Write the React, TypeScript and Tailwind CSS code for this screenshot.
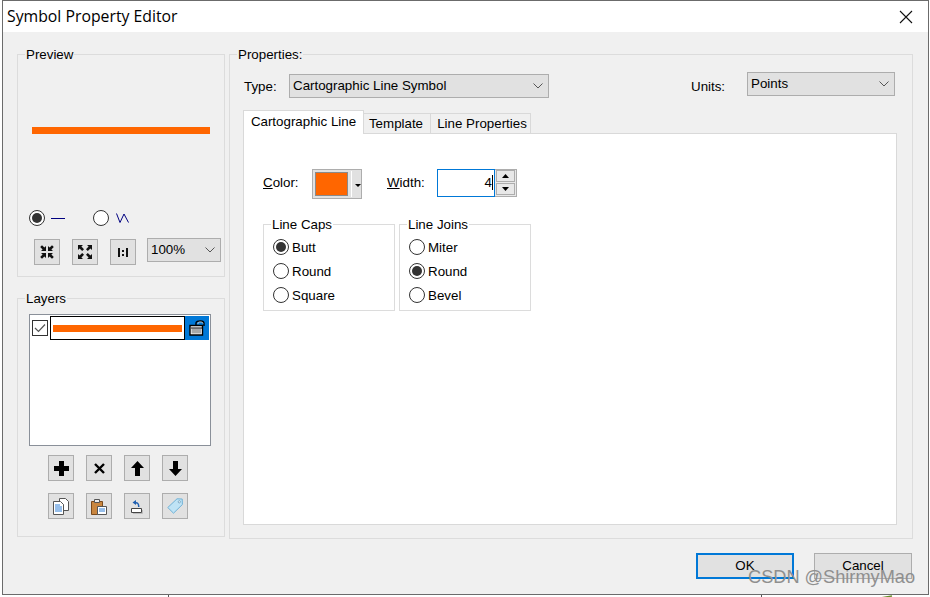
import type { ReactNode } from 'react';

const lineOrange = 'bg-[#ff6600]';

function Radio({ checked = false }: { checked?: boolean }) {
  return (
    <span className="flex h-[16px] w-[16px] shrink-0 items-center justify-center rounded-full border border-[#333] bg-white">
      {checked && <span className="h-[10px] w-[10px] rounded-full bg-[#333]" />}
    </span>
  );
}

function Chevron() {
  return (
    <svg width="10" height="6" viewBox="0 0 10 6" className="shrink-0">
      <path d="M0.5 0.5 L5 5 L9.5 0.5" fill="none" stroke="#555" strokeWidth="1" />
    </svg>
  );
}

function Select({ label, className }: { label: string; className: string }) {
  return (
    <div className={`flex h-[24px] items-center justify-between border border-[#adadad] bg-[#e1e1e1] pl-[3px] pr-[5px] ${className}`}>
      <span>{label}</span>
      <Chevron />
    </div>
  );
}

function IconButton({ children }: { children: ReactNode }) {
  return (
    <div className="flex h-[26px] w-[26px] items-center justify-center border border-[#adadad] bg-[#e1e1e1]">
      {children}
    </div>
  );
}

function Panel({ title, className, children }: { title: string; className: string; children: ReactNode }) {
  return (
    <div className={`border border-[#dcdcdc] ${className}`}>
      <div className="-mt-[8px] ml-[7px] h-[15px] w-fit bg-[#f0f0f0] px-[1px] leading-[16px]">{title}</div>
      {children}
    </div>
  );
}

function RadioGroup({ title, options, selected }: { title: string; options: string[]; selected: string }) {
  return (
    <div className="h-[87px] w-[132px] border border-[#dcdcdc]">
      <div className="-mt-[8px] ml-[7px] h-[15px] w-fit bg-white px-[1px] leading-[16px]">{title}</div>
      <div className="mt-[7px] flex flex-col gap-[8px] pl-[9px]">
        {options.map((o) => (
          <div key={o} className="flex h-[16px] items-center gap-[3px]">
            <Radio checked={o === selected} />
            <span className="mt-[2px]">{o}</span>
          </div>
        ))}
      </div>
    </div>
  );
}

// one corner of the zoom icons, repeated four times by mirroring
const corners = ['', 'translate(14 0) scale(-1 1)', 'translate(0 14) scale(1 -1)', 'translate(14 14) scale(-1 -1)'];

const ArrowsIn = () => (
  <svg width="14" height="14" viewBox="0 0 14 14" fill="#111">
    {corners.map((t) => (
      <path key={t} transform={t} d="M6 6 V1 L4.4 2.6 L2 0.2 L0.2 2 L2.6 4.4 L1 6 z" />
    ))}
  </svg>
);

const ArrowsOut = () => (
  <svg width="14" height="14" viewBox="0 0 14 14" fill="#111">
    {corners.map((t) => (
      <path key={t} transform={t} d="M0 0 H5 L3.4 1.6 L6 4.2 L4.2 6 L1.6 3.4 L0 5 z" />
    ))}
  </svg>
);

const OneToOne = () => (
  <svg width="10" height="9" viewBox="0 0 10 9" fill="#111" shapeRendering="crispEdges">
    <path d="M0 0h2v9H0zM8 0h2v9H8zM4 2h2v2H4zM4 6h2v2H4z" />
  </svg>
);

const Plus = () => (
  <svg width="15" height="15" viewBox="0 0 15 15" fill="#000" shapeRendering="crispEdges">
    <path d="M5 0h5v5h5v5h-5v5H5v-5H0V5h5z" />
  </svg>
);

const Cross = () => (
  <svg width="11" height="11" viewBox="0 0 11 11">
    <path d="M1 1 L10 10 M10 1 L1 10" stroke="#000" strokeWidth="2.4" />
  </svg>
);

const ArrowUp = () => (
  <svg width="13" height="15" viewBox="0 0 13 15" fill="#000">
    <path d="M6.5 0 L13 7 H9 V15 H4 V7 H0 z" />
  </svg>
);

const ArrowDown = () => (
  <svg width="13" height="15" viewBox="0 0 13 15" fill="#000">
    <path d="M6.5 15 L0 8 H4 V0 H9 V8 H13 z" />
  </svg>
);

const CopyIcon = () => (
  <svg width="16" height="17" viewBox="0 0 16 17">
    <path d="M6.5 0.5h6l3 3v9h-5v-6h-4z" fill="#fff" stroke="#555" />
    <path d="M0.5 3.5h7l3 3v10h-10z" fill="#fff" stroke="#555" />
    <path d="M2 7h5M2 9h7M2 11h7M2 13h7" stroke="#2f7fd6" />
  </svg>
);

const PasteIcon = () => (
  <svg width="16" height="17" viewBox="0 0 16 17">
    <path d="M0.5 3.5h11v13h-11z" fill="#c9863f" stroke="#7a4a1c" />
    <path d="M3.5 1.5h5v3h-5z" fill="#eee" stroke="#555" />
    <path d="M6.5 8.5h9v8h-9z" fill="#fff" stroke="#555" />
    <path d="M8 11h6M8 13h6" stroke="#2f7fd6" />
  </svg>
);

const RestoreIcon = () => (
  <svg width="14" height="15" viewBox="0 0 14 15">
    <path d="M1.5 9.5h10v4h-10z" fill="#fff" stroke="#444" />
    <path d="M12.5 11v3.5H3" fill="none" stroke="#bbb" />
    <path d="M6 1 L2.5 3.5 L6 6 V4.5 C7.5 4.5 8 5.5 8 8 H9.5 C9.5 4.5 8 3 6 3 z" fill="#1f5fb0" />
  </svg>
);

const TagIcon = () => (
  <svg width="16" height="16" viewBox="0 0 16 16">
    <path d="M10 0.8 L15.2 1 L15.4 6.5 L6.5 15.2 L0.8 9.5 z" fill="#bfe3f5" stroke="#6fb1d6" />
    <circle cx="12.3" cy="3.8" r="1.1" fill="#fff" stroke="#5a8fb0" strokeWidth="0.7" />
  </svg>
);

const LockIcon = () => (
  <svg width="16" height="16" viewBox="0 0 16 16">
    <path d="M7 5 V3 C7 1.6 9 1 11.5 1 C14 1 15 2 15 3.5 V6" fill="none" stroke="#000" strokeWidth="1.4" />
    <path d="M9 4 V3 C9 2.4 10 2 11.5 2 C13 2 14 2.6 14 3.5" fill="none" stroke="#ccc" />
    <path d="M1 5.5h12.5v9.5H1z" fill="#fff" stroke="#000" strokeWidth="1.4" />
    <path d="M2.5 8.5h9.5v5H2.5z" fill="#a8a8a8" />
    <path d="M2 8h11" stroke="#000" />
  </svg>
);

export default function App() {
  return (
    <div className="relative h-[597px] w-[930px] overflow-hidden bg-white font-['Liberation_Sans',sans-serif] text-[13.33px] leading-none text-black">
      {/* dialog window */}
      <div className="ml-[2px] h-[595px] w-[927px] border border-[#6b6b6b]">
        <div className="flex h-[31px] items-center justify-between bg-white pl-[4px] pr-[15px]">
          <span className="font-['Open_Sans',sans-serif] text-[15.8px]">Symbol Property Editor</span>
          <svg width="14" height="14" viewBox="0 0 14 14">
            <path d="M1 1 L13 13 M13 1 L1 13" stroke="#111" strokeWidth="1.1" />
          </svg>
        </div>

        <div className="flex h-[562px] flex-col bg-[#f0f0f0] pl-[14px] pt-[22px]">
          <div className="flex gap-[4px]">
            <div className="flex w-[208px] flex-col gap-[21px]">
              <Panel title="Preview" className="h-[223px]">
                <div className={`ml-[14px] mt-[65px] h-[7px] w-[178px] ${lineOrange}`} />
                <div className="ml-[11px] mt-[76px] flex h-[16px] items-center">
                  <Radio checked />
                  <span className="ml-[6px] h-[1px] w-[14px] bg-[#000080]" />
                  <span className="ml-[28px]"><Radio /></span>
                  <svg width="14" height="10" viewBox="0 0 14 10" className="ml-[7px]">
                    <path d="M0.5 0.5 L4 9.5 L8 1 L12.5 9.5" fill="none" stroke="#000080" />
                  </svg>
                </div>
                <div className="ml-[16px] mt-[13px] flex items-start">
                  <IconButton><ArrowsIn /></IconButton>
                  <span className="ml-[12px]"><IconButton><ArrowsOut /></IconButton></span>
                  <span className="ml-[12px]"><IconButton><OneToOne /></IconButton></span>
                  <Select label="100%" className="-mt-[1px] ml-[11px] w-[74px]" />
                </div>
              </Panel>

              <Panel title="Layers" className="h-[239px]">
                <div className="ml-[11px] mt-[8px] h-[132px] w-[182px] border border-[#8a9099] bg-white pl-[2px] pt-[1px]">
                  <div className="flex h-[24px] items-center">
                    <div className="flex h-[16px] w-[16px] items-center justify-center border border-[#333]">
                      <svg width="12" height="10" viewBox="0 0 12 10">
                        <path d="M1 5 L4.5 8.5 L11 1.5" fill="none" stroke="#555" strokeWidth="1.2" />
                      </svg>
                    </div>
                    <div className="ml-[2px] flex h-[24px] w-[135px] items-center justify-center border border-black bg-white">
                      <div className={`h-[7px] w-[129px] ${lineOrange}`} />
                    </div>
                    <div className="flex h-[24px] w-[24px] items-center justify-center bg-[#0078d7]">
                      <LockIcon />
                    </div>
                  </div>
                </div>
                <div className="ml-[30px] mt-[9px] flex gap-[12px]">
                  <IconButton><Plus /></IconButton>
                  <IconButton><Cross /></IconButton>
                  <IconButton><ArrowUp /></IconButton>
                  <IconButton><ArrowDown /></IconButton>
                </div>
                <div className="ml-[30px] mt-[12px] flex gap-[12px]">
                  <IconButton><CopyIcon /></IconButton>
                  <IconButton><PasteIcon /></IconButton>
                  <IconButton><RestoreIcon /></IconButton>
                  <IconButton><TagIcon /></IconButton>
                </div>
              </Panel>
            </div>

            <Panel title="Properties:" className="h-[485px] w-[684px]">
              <div className="flex h-[35px] items-start pl-[14px] pt-[11px]">
                <span className="mt-[7px] w-[45px]">Type:</span>
                <Select label="Cartographic Line Symbol" className="mt-[1px] w-[260px]" />
                <span className="ml-[142px] mt-[7px] w-[56px]">Units:</span>
                <Select label="Points" className="-mt-[1px] w-[148px]" />
              </div>

              <div className="ml-[13px] mt-[13px] flex h-[23px] items-end">
                <div className="z-10 -mb-[1px] flex h-[24px] w-[121px] items-center justify-center border border-b-0 border-[#d9d9d9] bg-white pb-[2px]">
                  Cartographic Line
                </div>
                <div className="flex h-[20px] w-[67px] items-center justify-center border border-l-0 border-b-0 border-[#d9d9d9] bg-[#f0f0f0] pr-[2px]">
                  Template
                </div>
                <div className="flex h-[20px] w-[100px] items-center justify-center border border-l-0 border-b-0 border-[#d9d9d9] bg-[#f0f0f0] pl-[3px]">
                  Line Properties
                </div>
              </div>

              <div className="ml-[13px] h-[392px] w-[654px] border border-[#d9d9d9] bg-white">
                <div className="ml-[19px] mt-[35px] flex h-[30px] items-center">
                  <span className="-mt-[2px] w-[49px]"><u>C</u>olor:</span>
                  <div className="flex h-[30px] w-[50px] items-center border border-[#adadad] bg-[#e1e1e1] pl-[2px]">
                    <div className={`h-[24px] w-[33px] border border-[#8a8a8a] ${lineOrange}`} />
                    <div className="ml-[3px] h-[26px] w-[1px] bg-white" />
                    <svg width="6" height="3" viewBox="0 0 6 3" className="ml-[3px] mt-[3px]">
                      <path d="M0 0h6L3 3z" fill="#000" />
                    </svg>
                  </div>
                  <span className="-mt-[2px] ml-[25px] w-[50px]"><u>W</u>idth:</span>
                  <div className="-mt-[3px] flex h-[28px] w-[58px] items-center justify-end border border-[#0078d7] bg-white pr-[1px]">
                    <span>4</span>
                    <span className="h-[15px] w-[1px] bg-black" />
                  </div>
                  <div className="-mt-[3px] flex h-[28px] w-[22px] flex-col items-center justify-center gap-[1px] border border-l-0 border-[#adadad] bg-[#e8e8e8] px-[1px]">
                    <div className="flex h-[12px] w-full items-center justify-center border border-[#adadad]">
                      <svg width="7" height="4" viewBox="0 0 7 4"><path d="M3.5 0L7 4H0z" fill="#000" /></svg>
                    </div>
                    <div className="flex h-[12px] w-full items-center justify-center border border-[#adadad]">
                      <svg width="7" height="4" viewBox="0 0 7 4"><path d="M0 0h7L3.5 4z" fill="#000" /></svg>
                    </div>
                  </div>
                </div>

                <div className="ml-[19px] mt-[25px] flex gap-[4px]">
                  <RadioGroup title="Line Caps" options={['Butt', 'Round', 'Square']} selected="Butt" />
                  <RadioGroup title="Line Joins" options={['Miter', 'Round', 'Bevel']} selected="Round" />
                </div>
              </div>
            </Panel>
          </div>

          <div className="ml-[679px] mt-[14px] flex gap-[20px]">
            <div className="flex h-[26px] w-[98px] items-center justify-center border-2 border-[#0078d7] bg-[#e1e1e1]">OK</div>
            <div className="flex h-[26px] w-[98px] items-center justify-center border border-[#adadad] bg-[#e1e1e1]">Cancel</div>
          </div>
        </div>
      </div>

      {/* watermark over the buttons */}
      <span className="absolute left-[748px] top-[567px] text-[18.2px] leading-[20px] text-[#8f8f8f]">CSDN @ShirmyMao</span>
      {/* bits of the desktop behind the dialog */}
      <svg width="930" height="3" viewBox="0 0 930 3" className="absolute left-0 top-[595px]">
        <path d="M168.5 0v3M761.5 0v3" stroke="#555" />
        <path d="M880 3 L892 1" stroke="#6a8f2a" strokeWidth="1.4" />
      </svg>
    </div>
  );
}
